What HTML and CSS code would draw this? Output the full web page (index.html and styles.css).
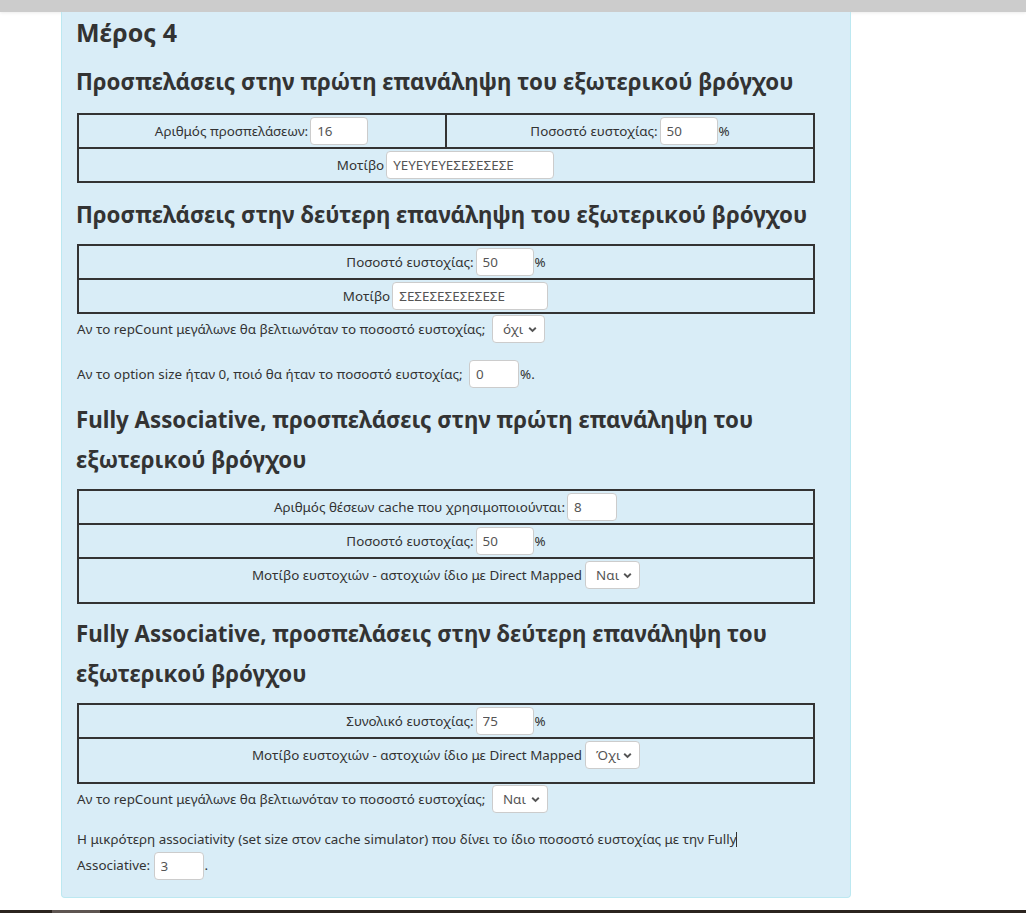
FILE: index.html
```html
<!DOCTYPE html>
<html lang="el">
<head>
<meta charset="utf-8">
<title>Μέρος 4</title>
<link rel="stylesheet" href="styles.css">
</head>
<body>
<div class="topbar"></div>
<div class="wrap">
  <div class="panel">
    <h3 class="part-title">Μέρος 4</h3>

    <h4 class="sec s1">Προσπελάσεις στην πρώτη επανάληψη του εξωτερικού βρόγχου</h4>
    <table class="qt">
      <tr>
        <td class="half"><div class="cell">Αριθμός προσπελάσεων:<input class="inp w58" value="16"></div></td>
        <td class="half"><div class="cell">Ποσοστό ευστοχίας:<input class="inp w58" value="50">%</div></td>
      </tr>
      <tr>
        <td colspan="2"><div class="cell">Μοτίβο<input class="inp w168" value="ΥΕΥΕΥΕΥΕΣΕΣΕΣΕΣΕ"></div></td>
      </tr>
    </table>

    <h4 class="sec s2">Προσπελάσεις στην δεύτερη επανάληψη του εξωτερικού βρόγχου</h4>
    <table class="qt">
      <tr><td><div class="cell">Ποσοστό ευστοχίας:<input class="inp w58" value="50">%</div></td></tr>
      <tr><td><div class="cell">Μοτίβο<input class="inp w156" value="ΣΕΣΕΣΕΣΕΣΕΣΕΣΕ"></div></td></tr>
    </table>
    <div class="line">Αν το repCount μεγάλωνε θα βελτιωνόταν το ποσοστό ευστοχίας; <span class="sel w53">όχι</span></div>
    <div class="line gap">Αν το option size ήταν 0, ποιό θα ήταν το ποσοστό ευστοχίας; <input class="inp w50" value="0">%.</div>

    <h4 class="sec s3">Fully Associative, προσπελάσεις στην πρώτη επανάληψη του εξωτερικού βρόγχου</h4>
    <table class="qt">
      <tr><td><div class="cell">Αριθμός θέσεων cache που χρησιμοποιούνται:<input class="inp w50" value="8"></div></td></tr>
      <tr><td><div class="cell">Ποσοστό ευστοχίας:<input class="inp w58" value="50">%</div></td></tr>
      <tr><td class="tall"><div class="cell">Μοτίβο ευστοχιών - αστοχιών ίδιο με Direct Mapped <span class="sel w55">Ναι</span></div></td></tr>
    </table>

    <h4 class="sec s4">Fully Associative, προσπελάσεις στην δεύτερη επανάληψη του εξωτερικού βρόγχου</h4>
    <table class="qt">
      <tr><td><div class="cell">Συνολικό ευστοχίας:<input class="inp w58" value="75">%</div></td></tr>
      <tr><td class="tall"><div class="cell">Μοτίβο ευστοχιών - αστοχιών ίδιο με Direct Mapped <span class="sel w55">Όχι</span></div></td></tr>
    </table>
    <div class="line">Αν το repCount μεγάλωνε θα βελτιωνόταν το ποσοστό ευστοχίας; <span class="sel w56">Ναι</span></div>
    <p class="para">Η μικρότερη associativity (set size στον cache simulator) που δίνει το ίδιο ποσοστό ευστοχίας με την Fully<span class="caret"></span><br>Associative: <input class="inp w50" value="3">.</p>
  </div>
</div>
<div class="bottombar"><span class="thumb"></span></div>
</body>
</html>
```

FILE: styles.css
```css
html, body {
  margin: 0;
  padding: 0;
  background: #fff;
}
body {
  font-family: "Noto Sans", "Open Sans", sans-serif;
  font-size: 13.4px;
  color: #333;
  width: 1026px;
  height: 913px;
  overflow: hidden;
  position: relative;
}
.topbar {
  height: 12px;
  background: #cccccc;
  box-shadow: 0 1px 3px rgba(0,0,0,0.08);
}
.wrap {
  padding-left: 61px;
}
.panel {
  width: 758px;
  background: #d9edf7;
  border: 1px solid #bce8f1;
  border-top: none;
  border-radius: 0 0 4px 4px;
  padding: 0 15px 17px 15px;
}
.part-title {
  margin: 0 0 0 -1px;
  padding-top: 3px;
  font-size: 25px;
  line-height: 34px;
  font-weight: 700;
  color: #333;
}
.sec {
  margin: 0;
  font-size: 22.3px;
  line-height: 40px;
  font-weight: 700;
  color: #333;
  position: relative;
  left: -1px;
}
.s1 { margin: 13px 0 11px; }
.s2 { margin: 12px 0 9px; }
.s3 { margin: 11px 0 9px; }
.s4 { margin: 10px 0 9px; }
.qt {
  width: 738px;
  border-collapse: collapse;
  border: 2px solid #333;
}
.qt td {
  border: 2px solid #333;
  padding: 2px 0;
  height: 28px;
}
.qt td.half { width: 50%; }
.qt td.tall { padding: 2px 0 13px; vertical-align: top; }
.cell {
  display: flex;
  justify-content: center;
  align-items: center;
  white-space: nowrap;
}
.inp {
  box-sizing: border-box;
  height: 28px;
  border: 1px solid #cccccc;
  border-radius: 4px;
  background: #fff;
  font-family: inherit;
  font-size: 13.4px;
  color: #555;
  padding: 0 6px;
  margin: 0 1px 0 2px;
  outline: none;
}
.w50 { width: 50px; }
.w58 { width: 58px; }
.w156 { width: 156px; }
.w168 { width: 168px; }
.w53 { width: 53px; }
.w55 { width: 55px; }
.w56 { width: 56px; }
.sel {
  box-sizing: border-box;
  display: inline-flex;
  align-items: center;
  height: 28px;
  border: 1px solid #cccccc;
  border-radius: 4px;
  background: #fff url("data:image/svg+xml,%3Csvg xmlns='http://www.w3.org/2000/svg' width='9' height='7' viewBox='0 0 9 7'%3E%3Cpath d='M1.2 1.8 L4.5 5 L7.8 1.8' fill='none' stroke='%23555' stroke-width='1.9'/%3E%3C/svg%3E") no-repeat right 7px center;
  padding: 0 6px 0 10px;
  margin-left: 3px;
  color: #555;
  font-size: 13.4px;
}
.line {
  display: flex;
  align-items: center;
  white-space: pre;
  height: 30px;
  margin-top: 0;
}
.line.gap { margin-top: 15px; }
.line .inp { margin-left: 3px; }
.para {
  margin: 13px 0 0 0;
  line-height: 25px;
}
.para .inp { vertical-align: middle; margin-left: 0; }
.caret {
  display: inline-block;
  width: 1px;
  height: 15px;
  background: #333;
  vertical-align: -3px;
}
.bottombar {
  position: absolute;
  left: 0;
  bottom: 0;
  width: 1026px;
  height: 3px;
  background: #2b241f;
}
.thumb {
  display: block;
  margin-left: 52px;
  width: 48px;
  height: 3px;
  background: #5e5551;
}
```
